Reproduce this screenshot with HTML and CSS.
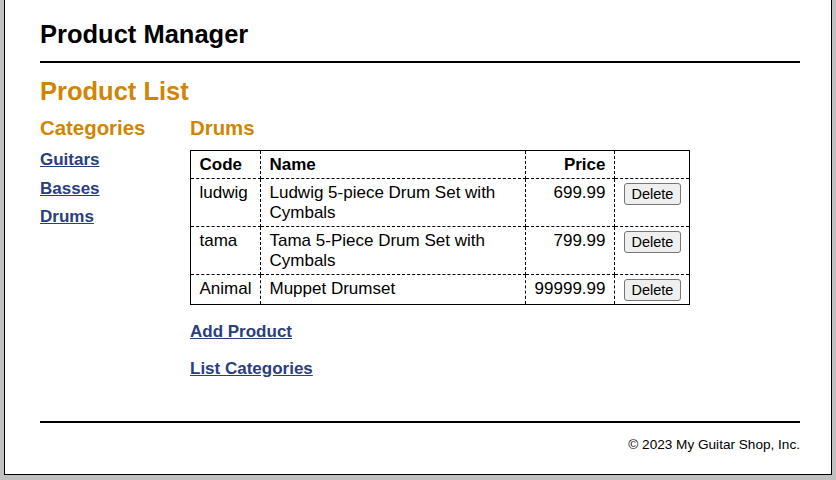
FILE: index.html
```
<!DOCTYPE html>
<html lang="en">
<head>
<meta charset="utf-8">
<title>My Guitar Shop</title>
<link rel="stylesheet" href="styles.css">
</head>
<body>
<div class="page">
  <header class="top">
    <h1 class="title">Product Manager</h1>
  </header>
  <main class="main">
    <h1 class="page-title">Product List</h1>
    <div class="columns">
      <aside class="aside">
        <h2 class="sub">Categories</h2>
        <nav>
          <ul class="cat-list">
            <li><a class="link" href="#">Guitars</a></li>
            <li><a class="link" href="#">Basses</a></li>
            <li><a class="link" href="#">Drums</a></li>
          </ul>
        </nav>
      </aside>
      <section class="content">
        <h2 class="sub">Drums</h2>
        <table class="products">
          <colgroup>
            <col class="c-code">
            <col class="c-name">
            <col class="c-price">
            <col class="c-del">
          </colgroup>
          <tr>
            <th>Code</th>
            <th>Name</th>
            <th class="right">Price</th>
            <th>&nbsp;</th>
          </tr>
          <tr>
            <td>ludwig</td>
            <td>Ludwig 5-piece Drum Set with Cymbals</td>
            <td class="right">699.99</td>
            <td><button class="btn" type="button">Delete</button></td>
          </tr>
          <tr>
            <td>tama</td>
            <td>Tama 5-Piece Drum Set with Cymbals</td>
            <td class="right">799.99</td>
            <td><button class="btn" type="button">Delete</button></td>
          </tr>
          <tr>
            <td>Animal</td>
            <td>Muppet Drumset</td>
            <td class="right">99999.99</td>
            <td><button class="btn" type="button">Delete</button></td>
          </tr>
        </table>
        <p class="action"><a class="link" href="#">Add Product</a></p>
        <p class="action"><a class="link" href="#">List Categories</a></p>
      </section>
    </div>
  </main>
  <footer class="foot">
    <p class="copy">&copy; 2023 My Guitar Shop, Inc.</p>
  </footer>
</div>
</body>
</html>
```
FILE: styles.css
```
html, body {
  margin: 0;
  padding: 0;
}
body {
  background: #c0c0c0;
  font-family: "Liberation Sans", Arial, sans-serif;
  font-size: 17px;
  line-height: 20px;
  color: #000;
}
.page {
  width: 760px;
  margin: 0 0 5px 4px;
  padding: 0 31px 0 35px;
  background: #fff;
  border: 1px solid #000;
  border-top: none;
}
.top {
  padding: 19px 0 12px;
  border-bottom: 2px solid #000;
}
.title {
  margin: 0;
  font-size: 25.5px;
  line-height: 30px;
  color: #000;
}
.main {
  padding: 13px 0 25px;
}
.page-title {
  margin: 0 0 10px;
  font-size: 25.5px;
  line-height: 30px;
  color: rgb(208, 133, 4);
}
.columns {
  display: flex;
}
.aside {
  width: 150px;
  flex: none;
}
.content {
  width: 500px;
  flex: none;
}
.sub {
  margin: 0 0 10px;
  font-size: 20.4px;
  line-height: 24px;
  color: rgb(208, 133, 4);
}
.cat-list {
  list-style: none;
  margin: 0;
  padding: 0;
}
.cat-list li {
  padding-bottom: 8.5px;
}
.link {
  color: rgb(41, 64, 124);
  font-weight: bold;
}
.products {
  border: 1px solid #000;
  border-collapse: collapse;
  table-layout: fixed;
  width: 499px;
}
.c-code { width: 70px; }
.c-name { width: 265px; }
.c-price { width: 89px; }
.c-del { width: 75px; }
.products th,
.products td {
  border: 1px dashed #000;
  padding: 4px 8.5px 3px;
  vertical-align: top;
  text-align: left;
}
.products .right {
  text-align: right;
}
.btn {
  display: inline-block;
  vertical-align: top;
  height: 22px;
  margin: 0;
  padding: 0 7px;
  font-family: "Liberation Sans", Arial, sans-serif;
  font-size: 14.5px;
  line-height: 18px;
  color: #000;
  background: #efefef;
  border: 1px solid #767676;
  border-radius: 3px;
}
.action {
  margin: 17px 0;
}
.foot {
  border-top: 2px solid #000;
  padding: 14px 0 21px;
}
.copy {
  margin: 0;
  text-align: right;
  font-size: 13.6px;
  line-height: 16px;
}
```
